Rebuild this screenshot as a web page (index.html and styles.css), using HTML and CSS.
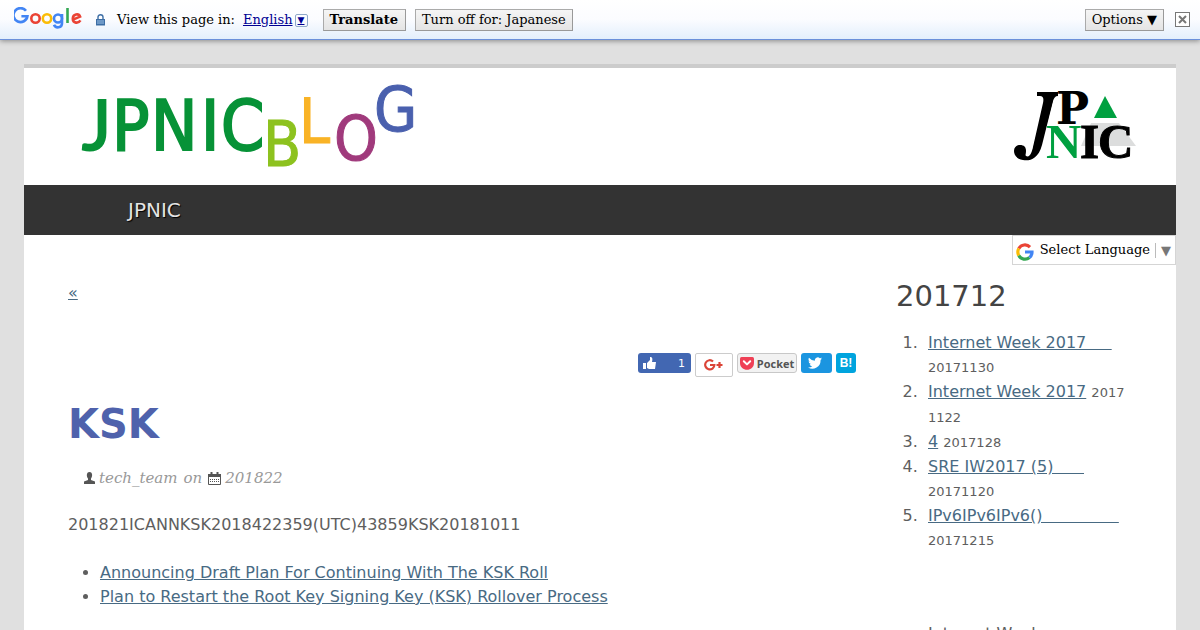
FILE: index.html
```
<!DOCTYPE html>
<html lang="ja">
<head>
    <meta charset="UTF-8">
    <meta name="viewport" content="width=device-width, initial-scale=1.0">
    <title>KSK - JPNIC Blog</title>
    <link rel="stylesheet" href="styles.css">
</head>
<body>

<div class="translate-bar">
    <svg class="google-logo" width="68" height="24" viewBox="0 0 68 24" role="img" aria-label="Google">
        <g fill="none" stroke-width="2.6">
            <path stroke="#4285f4" d="M12 3.8A7 7 0 1 0 13.400 9.200H7.400"/>
            <circle stroke="#ea4335" cx="21.500" cy="11.500" r="4.200"/>
            <circle stroke="#fbbc05" cx="33" cy="11.500" r="4.200"/>
            <path stroke="#4285f4" d="M48 7v9.200c0 4.800-6.400 5.600-8 1.600"/>
            <circle stroke="#4285f4" cx="44" cy="11.500" r="4"/>
            <path stroke="#34a853" d="M53.500 1v15"/>
            <path stroke="#ea4335" d="M58.400 12.900l7.700-3.300c-1.300-3.400-7.300-2.800-7.300 2.200 0 4.600 5.600 5 7.600 1.600"/>
        </g>
    </svg>
    <svg class="lock" width="9" height="12" viewBox="0 0 9 12">
        <path d="M2 6V3c0-3 5-3 5 0v3" fill="none" stroke="#3d6ea5" stroke-width="1.4"/>
        <path d="M0 5h9v6.500H0z" fill="#3d6ea5"/>
        <path d="M1 7h7M1 9h7" stroke="#9fc3e8"/>
    </svg>
    <span class="view-in">View this page in:</span>
    <a class="lang" href="#">English<span class="lang-arrow">▼</span></a>
    <button class="bar-button translate" type="button">Translate</button>
    <button class="bar-button" type="button">Turn off for: Japanese</button>
    <button class="bar-button options" type="button">Options ▼</button>
    <button class="close" type="button" aria-label="Close">
        <svg width="9" height="9" viewBox="0 0 9 9"><path d="M1 1l7 7M8 1L1 8" stroke="#777" stroke-width="2"/></svg>
    </button>
</div>

<div class="wrapper">
    <header class="site-header">
        <a href="#" aria-label="JPNIC Blog">
            <svg class="blog-logo" width="340" height="90" viewBox="0 0 340 90">
                <g class="logo-green">
                    <text class="lato" x="4" y="68">J</text>
                    <text x="34" y="68">P</text>
                    <text x="73" y="68">N</text>
                    <text x="123" y="68">I</text>
                    <text x="143" y="68">C</text>
                </g>
                <text class="logo-b" x="185" y="84">B</text>
                <text class="logo-l" x="221" y="61">L</text>
                <text class="logo-o" x="256" y="78">O</text>
                <text class="logo-g" x="296" y="49">G</text>
            </svg>
        </a>
        <a href="#" aria-label="JPNIC">
            <svg class="jpnic-logo" width="120" height="70" viewBox="0 0 120 70">
                <path d="M77 31h28l17 23H67z" fill="#dcdddd"/>
                <path d="M91 4l12 22H80z" fill="#00a040"/>
                <path d="M23 0h21v4c-3 0-4 2-5 5L28 53c-4 15-13 16-19 15-7-1-9-6-9-9 0-4 3-6 6-6 4 0 6 2 6 6 0 3-1 4 0 5 4 2 6-4 7-9L29 11c1-5 0-7-3-7h-3z"/>
                <path d="M32 5L18 61l8-4L39 8z"/>
                <text class="mark-p" x="42" y="32">P</text>
                <text class="mark-n" x="32" y="66">N</text>
                <text class="mark-i" x="66" y="66">I</text>
                <text class="mark-i" x="84" y="66">C</text>
            </svg>
        </a>
    </header>

    <nav class="main-nav">
        <a href="#">JPNIC</a>
    </nav>

    <div class="language-row">
        <button class="select-language" type="button">
            <svg width="18" height="18" viewBox="0 0 18 18" fill="none" stroke-width="3.200">
                <path stroke="#ea4335" d="M2.800 5.500A7 7 0 0 1 14 4.100"/>
                <path stroke="#fbbc05" d="M2.800 5.500a7.200 7.200 0 0 0 0 7"/>
                <path stroke="#34a853" d="M2.800 12.500A7 7 0 0 0 13.500 14.500"/>
                <path stroke="#4285f4" d="M13.500 14.500A7 7 0 0 0 16 9H9"/>
            </svg>
            <span class="select-text">Select Language</span>
            <span class="select-arrow">▼</span>
        </button>
    </div>

    <div class="columns">
        <main>
            <a href="#">«</a>

            <div class="share">
                <button class="share-button like" type="button" aria-label="Like">
                    <svg width="13" height="13" viewBox="0 0 13 13" fill="#fff"><path d="M0 6h3v6H0zM4 6l3-3V0c2 0 3 1 2 5h4l-1 7H6l-2-1z"/></svg>
                    <span>1</span>
                </button>
                <button class="share-button gplus" type="button" aria-label="Google Plus">
                    <svg width="20" height="12" viewBox="0 0 20 12" fill="none" stroke="#db4437" stroke-width="2.200"><path d="M9 2.500A4.600 4.600 0 1 0 10.400 6H6M12.500 6h6M15.500 3v6"/></svg>
                </button>
                <button class="share-button pocket" type="button">
                    <svg width="14" height="13" viewBox="0 0 14 13"><path d="M1.500 0h11Q14 0 14 1.500V6c0 9-14 9-14 0V1.500Q0 0 1.500 0z" fill="#ef4056"/><path d="M3.800 4.300L7 7.400l3.200-3.100" fill="none" stroke="#fff" stroke-width="2" stroke-linecap="round" stroke-linejoin="round"/></svg>
                    Pocket
                </button>
                <button class="share-button tweet" type="button" aria-label="Tweet">
                    <svg width="14" height="12" viewBox="0 0 24 20" fill="#fff"><path d="M24 2.400a9 9 0 0 1-2.800.800A5 5 0 0 0 23.300.500a10 10 0 0 1-3.100 1.200 5 5 0 0 0-8.400 4.500A14 14 0 0 1 1.700 1a5 5 0 0 0 1.500 6.600 5 5 0 0 1-2.200-.600 5 5 0 0 0 3.900 4.900 5 5 0 0 1-2.200.100 5 5 0 0 0 4.600 3.400A10 10 0 0 1 0 17.500 14 14 0 0 0 21.500 4.900 10 10 0 0 0 24 2.400z"/></svg>
                </button>
                <button class="share-button hatena" type="button">B!</button>
            </div>

            <h1>KSK</h1>
            <div class="meta">
                <svg width="11" height="12" viewBox="0 0 11 12" fill="#555"><path d="M5.500 0C9 0 8.500 5 7 6.500v1.500l4 1.500V12H0V9.500L4 8V6.500C2.500 5 2 0 5.500 0z"/></svg>
                <span class="author">tech_team</span>
                <span class="on">on</span>
                <svg width="13" height="13" viewBox="0 0 13 13" fill="none" stroke="#555"><path d="M.5 2.500h12v10H.5z"/><path d="M0 3.500h13" stroke-width="3"/><path d="M3.500 0v3M9.500 0v3" stroke-width="2"/><path d="M2 7.500h9M2 9.500h9" stroke-dasharray="1 1"/></svg>
                <span>201822</span>
            </div>
            <p>201821ICANNKSK2018422359(UTC)43859KSK20181011</p>
            <ul>
                <li><a href="#">Announcing Draft Plan For Continuing With The KSK Roll</a></li>
                <li><a href="#">Plan to Restart the Root Key Signing Key (KSK) Rollover Process</a></li>
            </ul>
        </main>

        <aside>
            <h2>201712</h2>
            <ol>
                <li><a href="#">Internet Week 2017&nbsp;&nbsp;&nbsp;&nbsp;&nbsp;</a><br><small>20171130</small></li>
                <li><a href="#">Internet Week 2017</a> <small>2017<br>1122</small></li>
                <li><a href="#">4</a> <small>2017128</small></li>
                <li><a href="#">SRE IW2017 (5)&nbsp;&nbsp;&nbsp;&nbsp;&nbsp;&nbsp;</a><br><small>20171120</small></li>
                <li><a href="#">IPv6IPv6IPv6()&nbsp;&nbsp;&nbsp;&nbsp;&nbsp;&nbsp;&nbsp;&nbsp;&nbsp;&nbsp;&nbsp;&nbsp;&nbsp;&nbsp;&nbsp;</a><br><small>20171215</small></li>
            </ol>
            <div class="more">Internet Week</div>
        </aside>
    </div>
</div>

</body>
</html>
```
FILE: styles.css
```
body {
    margin: 0;
    background-color: #e0e0e0;
    color: #5e5e5e;
    font-family: "DejaVu Sans", Verdana, sans-serif;
    font-size: 16px;
    line-height: 24px;
    height: 100vh;
    overflow: hidden;
}
a {
    color: #486a83;
}
button {
    font-family: inherit;
    cursor: pointer;
}

/* translate bar */
.translate-bar {
    display: flex;
    align-items: center;
    height: 39px;
    padding: 0 10px 0 14px;
    background: linear-gradient(#fff, #fbfcff 50%, #e3effc);
    border-bottom: 1px solid #6b90da;
    box-shadow: 0 1px 5px rgba(0, 0, 0, 0.4);
    color: #000;
    font-family: "DejaVu Serif", serif;
    font-size: 13px;
}
.google-logo {
    margin-bottom: 2px;
}
.lock {
    margin: 0 12px 0 14px;
}
.lang {
    display: flex;
    align-items: center;
    margin: 0 15px 0 8px;
    color: #000093;
}
.lang-arrow {
    width: 11px;
    height: 11px;
    margin: 2px 0 0 2px;
    border: 1px solid #8fa9c9;
    border-radius: 2px;
    font-size: 9px;
    line-height: 11px;
    text-align: center;
}
.bar-button {
    height: 22px;
    margin-right: 9px;
    padding: 0 6px;
    border: 1px solid #aaa;
    border-right-color: #999;
    border-bottom-color: #999;
    background: linear-gradient(#f5f5f5, #e4e4e4);
    color: #000;
    font-size: 13px;
}
.translate {
    padding-right: 7px;
    font-weight: bold;
}
.options {
    margin-left: auto;
    margin-right: 11px;
}
.close {
    display: flex;
    align-items: center;
    justify-content: center;
    width: 15px;
    height: 15px;
    padding: 0;
    border: 1px solid #777;
    background: #fff;
}

/* header */
.wrapper {
    margin: 24px 24px 0;
    border-top: 4px solid #ccc;
    background-color: #fff;
}
.site-header {
    display: flex;
    justify-content: space-between;
    padding: 14px 42px 13px 54px;
}
.site-header svg {
    display: block;
    overflow: visible;
}
.blog-logo {
    font-family: "DejaVu Sans Condensed", "DejaVu Sans", sans-serif;
    font-stretch: condensed;
    font-size: 62px;
}
.logo-green {
    fill: #079237;
    stroke: #079237;
    stroke-width: 2;
    font-size: 69px;
}
.lato {
    font-family: Lato, sans-serif;
}
.logo-b {
    fill: #8dc21f;
    stroke: #8dc21f;
}
.logo-l {
    fill: #f9b326;
    stroke: #f9b326;
}
.logo-o {
    fill: #a03a7c;
    stroke: #a03a7c;
}
.logo-g {
    fill: #4a60ae;
    stroke: #4a60ae;
}
.jpnic-logo {
    margin-top: 10px;
    font-family: "Liberation Serif", serif;
    font-size: 49px;
    font-weight: bold;
}
.mark-p {
    font-family: "DejaVu Serif", serif;
    font-size: 44px;
}
.mark-n {
    fill: #00a040;
}
.mark-i {
    stroke: #000;
}
.main-nav {
    padding: 13px 104px;
    background-color: #333;
    font-size: 20px;
}
.main-nav a {
    color: #e4e4e4;
    text-decoration: none;
    text-shadow: 1px 1px 1px #000;
}
.language-row {
    display: flex;
    justify-content: flex-end;
}
.select-language {
    display: flex;
    align-items: center;
    height: 30px;
    padding: 0 4px 0 3px;
    border: 1px solid #d5d5d5;
    background: #fff;
    color: #000;
    font-family: "DejaVu Serif", serif;
    font-size: 13px;
}
.select-language svg {
    margin-top: 4px;
}
.select-text {
    margin: 0 5px 2px 6px;
}
.select-arrow {
    padding-left: 5px;
    border-left: 1px solid #bbb;
    color: #777;
}

/* content */
.columns {
    display: flex;
    gap: 40px;
    padding: 16px 44px 0;
}
main {
    flex: 1;
}
aside {
    width: 236px;
}
.share {
    display: flex;
    justify-content: flex-end;
    gap: 4px;
    height: 24px;
    margin: 48px 0 23px;
}
.share-button {
    display: flex;
    align-items: center;
    justify-content: center;
    height: 20px;
    padding: 0;
    border: 0;
    border-radius: 3px;
    color: #fff;
    font-size: 11px;
}
.like {
    justify-content: space-between;
    width: 53px;
    padding: 0 6px 0 5px;
    background: #4267b2;
}
.gplus {
    width: 38px;
    height: 24px;
    border: 1px solid #ccc;
    border-radius: 2px;
    background: #fff;
}
.pocket {
    gap: 3px;
    width: 60px;
    border: 1px solid #c8c8c8;
    background: #f2f2f2;
    color: #555;
    font-family: "Open Sans", sans-serif;
    font-weight: bold;
}
.tweet {
    width: 31px;
    padding-right: 4px;
    background: #1b95e0;
}
.hatena {
    width: 20px;
    background: #00a4de;
    font-family: "Liberation Sans", sans-serif;
    font-size: 12px;
    font-weight: bold;
}
h1 {
    margin: 0 0 18px;
    color: #4f62ac;
    font-size: 40px;
    line-height: 48px;
}
.meta {
    display: flex;
    align-items: center;
    gap: 4px;
    padding-left: 16px;
    color: #999;
    font-family: "DejaVu Serif", serif;
    font-size: 15px;
    font-style: italic;
}
.on {
    margin: 0 2px;
}
p {
    margin: 23px 0 24px;
}
ul,
ol {
    margin: 0;
    padding-left: 32px;
}
ol li::marker {
    content: counter(list-item) ".\00a0\00a0";
}
h2 {
    margin: 0 0 20px;
    color: #444;
    font-size: 29px;
    font-weight: normal;
    line-height: 30px;
}
small {
    font-size: 13px;
}
.more {
    padding: 69px 32px 0;
}
```
